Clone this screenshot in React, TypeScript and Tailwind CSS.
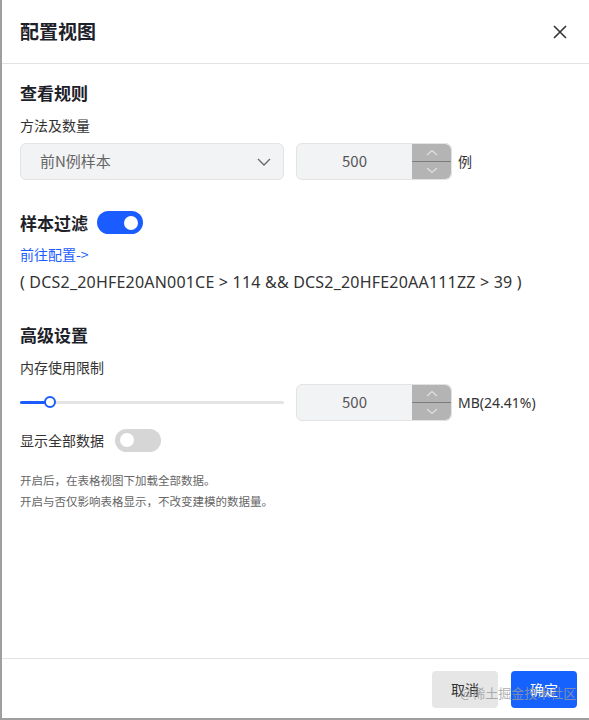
import React from "react";

const font = { fontFamily: '"Noto Sans CJK SC", "Noto Sans", sans-serif' };

function Stepper() {
  return (
    <div className="flex flex-col w-[39px] h-full bg-[#b4b4b4] rounded-r-[6px] overflow-hidden">
      <div className="flex-1 flex items-center justify-center border-b border-[#7d7d7d]">
        <svg width="12" height="7" viewBox="0 0 12 7" fill="none" stroke="#e0e0e0" strokeWidth="1.2">
          <path d="M1 6 L6 1.5 L11 6" />
        </svg>
      </div>
      <div className="flex-1 flex items-center justify-center">
        <svg width="12" height="7" viewBox="0 0 12 7" fill="none" stroke="#e0e0e0" strokeWidth="1.2">
          <path d="M1 1 L6 5.5 L11 1" />
        </svg>
      </div>
    </div>
  );
}

function NumInput() {
  return (
    <div className="flex w-[156px] h-[37px] rounded-[6px] border border-[#e3e3e3] bg-[#f2f3f5] overflow-hidden">
      <div className="flex-1 flex items-center justify-center text-[15px] text-[#555]">500</div>
      <Stepper />
    </div>
  );
}

export default function App() {
  return (
    <div className="w-[589px] h-[720px] bg-white relative border-l-[2px] border-b-[2px] border-[#9f9f9f] flex flex-col text-[#222]" style={font}>
      {/* header */}
      <div className="h-[64px] shrink-0 flex items-center justify-between pl-[18px] pr-[22px] border-b border-[#e2e2e2]">
        <div className="text-[19px] font-bold text-[#1d2129]">配置视图</div>
        <svg width="14" height="14" viewBox="0 0 14 14" stroke="#333" strokeWidth="1.6" fill="none">
          <path d="M1 1 L13 13 M13 1 L1 13" />
        </svg>
      </div>

      {/* body */}
      <div className="flex-1 pl-[18px] pr-[20px] pt-[18px]">
        <div className="text-[17px] font-bold text-[#1d2129] leading-[22px]">查看规则</div>
        <div className="text-[14px] text-[#333] mt-[12px] leading-[18px]">方法及数量</div>
        <div className="flex items-center mt-[9px]">
          <div className="w-[264px] h-[37px] rounded-[6px] border border-[#e3e3e3] bg-[#f2f3f5] flex items-center justify-between pl-[19px] pr-[12px]">
            <span className="text-[15px] text-[#666]">前N例样本</span>
            <svg width="14" height="8" viewBox="0 0 14 8" fill="none" stroke="#666" strokeWidth="1.3">
              <path d="M1 1 L7 7 L13 1" />
            </svg>
          </div>
          <div className="ml-[12px]">
            <NumInput />
          </div>
          <span className="ml-[6px] text-[14px] text-[#333]">例</span>
        </div>

        <div className="flex items-center mt-[30px]">
          <span className="text-[17px] font-bold text-[#1d2129]">样本过滤</span>
          <div className="ml-[9px] w-[46px] h-[23px] rounded-full bg-[#1a5cff] flex items-center justify-end pr-[5px]">
            <div className="w-[14px] h-[14px] rounded-full bg-white" />
          </div>
        </div>
        <div className="text-[14px] text-[#1a5cff] mt-[9px] leading-[18px]">前往配置-&gt;</div>
        <div className="text-[16px] text-[#333] mt-[8px] leading-[22px] tracking-[0.2px]" style={{ fontFamily: '"Noto Sans", "Noto Sans CJK SC", sans-serif' }}>
          ( DCS2_20HFE20AN001CE &gt; 114 &amp;&amp; DCS2_20HFE20AA111ZZ &gt; 39 )
        </div>

        <div className="text-[17px] font-bold text-[#1d2129] mt-[31px] leading-[22px]">高级设置</div>
        <div className="text-[14px] text-[#333] mt-[12px] leading-[18px]">内存使用限制</div>
        <div className="flex items-center mt-[8px]">
          <div className="w-[264px] h-[36px] relative flex items-center">
            <div className="w-full h-[3px] bg-[#e4e4e4] rounded-full" />
            <div className="absolute left-0 w-[30px] h-[3px] bg-[#1a5cff] rounded-full" />
            <div className="absolute left-[24px] w-[12px] h-[12px] rounded-full bg-white border-[2px] border-[#1a5cff]" />
          </div>
          <div className="ml-[12px]">
            <NumInput />
          </div>
          <span className="ml-[6px] text-[14px] text-[#333]" style={{ fontFamily: '"Noto Sans", sans-serif' }}>MB(24.41%)</span>
        </div>
        <div className="flex items-center mt-[8px]">
          <span className="text-[14px] text-[#333]">显示全部数据</span>
          <div className="ml-[11px] w-[46px] h-[23px] rounded-full bg-[#d6d6d6] flex items-center pl-[5px]">
            <div className="w-[14px] h-[14px] rounded-full bg-white" />
          </div>
        </div>
        <div className="text-[11.5px] text-[#666] mt-[18px] leading-[21px]">
          <div>开启后，在表格视图下加载全部数据。</div>
          <div>开启与否仅影响表格显示，不改变建模的数据量。</div>
        </div>
      </div>

      {/* footer */}
      <div className="h-[60px] shrink-0 border-t border-[#e2e2e2] flex items-start justify-end gap-[13px] pr-[12px] pt-[12px]">
        <div className="w-[66px] h-[37px] rounded-[4px] bg-[#e6e6e6] flex items-center justify-center text-[14px] text-[#333]">取消</div>
        <div className="w-[66px] h-[37px] rounded-[4px] bg-[#1662ff] flex items-center justify-center text-[14px] text-white">确定</div>
      </div>
      <div className="absolute left-[458px] top-[683px] text-[13px] text-[#9a9a9a]/80 pointer-events-none">@稀土掘金技术社区</div>
    </div>
  );
}
